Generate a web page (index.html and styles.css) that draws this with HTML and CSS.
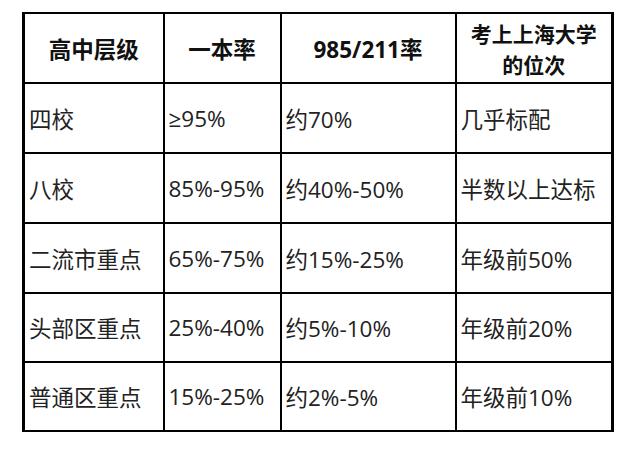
FILE: index.html
```html
<!DOCTYPE html>
<html lang="zh-CN">
<head>
<meta charset="utf-8">
<link rel="stylesheet" href="styles.css">
</head>
<body>
<table class="grid">
  <colgroup>
    <col class="c1"><col class="c2"><col class="c3"><col class="c4">
  </colgroup>
  <thead>
    <tr class="head">
      <th>高中层级</th>
      <th>一本率</th>
      <th><span class="num">985/211</span>率</th>
      <th class="two"><span class="line">考上上海大学</span><span class="line">的位次</span></th>
    </tr>
  </thead>
  <tbody>
    <tr class="r70"><td>四校</td><td>≥95%</td><td>约70%</td><td>几乎标配</td></tr>
    <tr class="r70"><td>八校</td><td>85%-95%</td><td>约40%-50%</td><td>半数以上达标</td></tr>
    <tr class="r70"><td>二流市重点</td><td>65%-75%</td><td>约15%-25%</td><td>年级前50%</td></tr>
    <tr class="r69"><td>头部区重点</td><td>25%-40%</td><td>约5%-10%</td><td>年级前20%</td></tr>
    <tr class="r69"><td>普通区重点</td><td>15%-25%</td><td>约2%-5%</td><td>年级前10%</td></tr>
  </tbody>
</table>
</body>
</html>
```

FILE: styles.css
```css
html, body {
  margin: 0;
  padding: 0;
  background: #ffffff;
}

.grid {
  margin: 12px 0 0 22px;
  border-collapse: collapse;
  table-layout: fixed;
  width: 592px;
  border-style: solid;
  border-color: #000;
  border-width: 2px 3px;
}

.c1 { width: 140px; }
.c2 { width: 117px; }
.c3 { width: 175px; }
.c4 { width: 157px; }

.grid th,
.grid td {
  border: 2px solid #000;
  padding: 0 0 0 4px;
  vertical-align: middle;
  white-space: nowrap;
}

.grid th {
  font-family: "Noto Sans CJK SC", sans-serif;
  font-weight: 700;
  font-size: 22.5px;
  color: #111;
  text-align: center;
  padding: 0;
}

.grid th .num {
  font-family: "Open Sans", "Noto Sans CJK SC", sans-serif;
  font-weight: 700;
}

.grid th.two {
  font-size: 21px;
  padding-top: 2px;
}

.grid th .line {
  display: block;
  line-height: 31px;
}

.grid td {
  font-family: "Open Sans", "Noto Sans CJK SC", sans-serif;
  font-weight: 400;
  font-size: 22.5px;
  color: #222;
  text-align: left;
}

.head { height: 70px; }
.r70 { height: 70px; }
.r69 { height: 69px; }
```
